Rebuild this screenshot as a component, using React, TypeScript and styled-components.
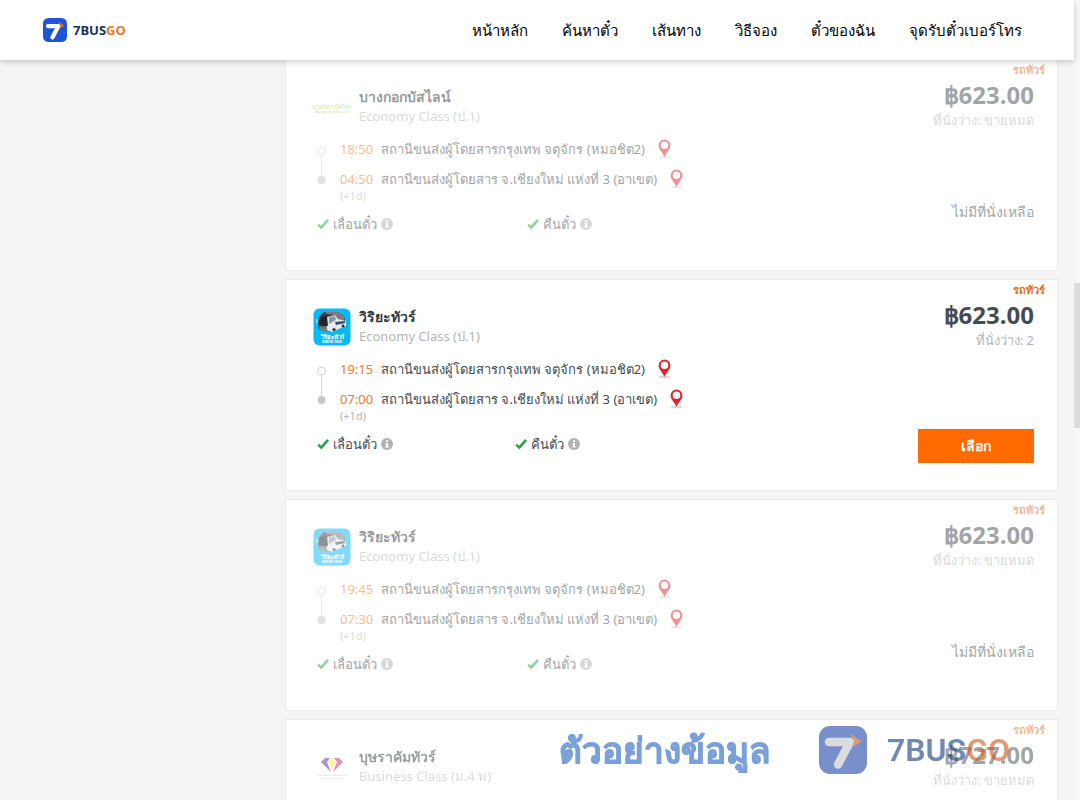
import React from "react";
import styled, { createGlobalStyle } from "styled-components";

const sans = `"Noto Sans", "Open Sans", "Liberation Sans", sans-serif`;

const GlobalStyle = createGlobalStyle`
  *, *::before, *::after { box-sizing: border-box; }
  body { margin: 0; background: #f5f5f5; font-family: ${sans}; font-size: 13px; color: #444b52; }
`;

const Page = styled.div`
  display: flex;
  height: 100vh;
  overflow: hidden;
`;

const Content = styled.div`
  position: relative;
  flex: 1;
  min-width: 0;
`;

const Header = styled.header`
  position: absolute;
  inset: 0 0 auto 0;
  z-index: 2;
  display: flex;
  align-items: center;
  justify-content: space-between;
  height: 60px;
  padding: 0 52px 0 43px;
  background: #fff;
  box-shadow: 0 2px 6px rgba(0, 0, 0, 0.2);
`;

const Brand = styled.a`
  display: flex;
  align-items: center;
  gap: 6px;
  font-size: 13px;
  font-weight: 700;
  line-height: 24px;
  color: #16305a;
  text-decoration: none;
`;

const Accent = styled.span`
  color: #ee7a2b;
`;

const Nav = styled.nav`
  display: flex;
  gap: 34px;
`;

const NavLink = styled.a`
  font-size: 15px;
  line-height: 24px;
  color: #000;
  text-decoration: none;
  white-space: nowrap;
`;

const Results = styled.main`
  display: flex;
  flex-direction: column;
  gap: 8px;
  padding: 59px 16px 0 285px;
`;

const Card = styled.article`
  position: relative;
  display: flex;
  min-height: 212px;
  padding: 27px 23px 24px 27px;
  background: #fff;
  border: 1px solid #ececec;
`;

const Faded = styled.div<{ $soldOut?: boolean }>`
  display: flex;
  flex: 1;
  opacity: ${(p) => (p.$soldOut ? 0.5 : 1)};
`;

const Tag = styled.span`
  position: absolute;
  top: 3px;
  right: 12px;
  font-size: 11px;
  font-weight: 700;
  line-height: 14px;
  color: #e0701c;
`;

const Trip = styled.section`
  flex: 1;
  min-width: 0;
`;

const Operator = styled.div`
  display: flex;
  align-items: center;
  gap: 8px;
`;

const OperatorText = styled.div`
  padding-bottom: 2px;
`;

const OperatorName = styled.h3`
  margin: 0;
  font-size: 14px;
  font-weight: 700;
  line-height: 20px;
  color: #33383d;
`;

const ClassName = styled.p`
  margin: 0;
  line-height: 18px;
  color: #b4b4b4;
`;

const Route = styled.div`
  display: flex;
  gap: 14px;
  margin: 11px 0 0 4px;
`;

const Stops = styled.ul`
  margin: 0;
  padding: 0;
  list-style: none;
`;

const Stop = styled.li`
  display: grid;
  grid-template-columns: 33px auto auto;
  column-gap: 8px;
  align-content: start;
  justify-content: start;
  min-height: 30px;
  line-height: 22px;
  white-space: nowrap;
`;

const Time = styled.time`
  color: #f47a1c;
`;

const NextDay = styled.span`
  grid-column: 1;
  font-size: 11px;
  line-height: 12px;
  color: #b4b4b4;
`;

const PinIcon = styled.svg`
  margin-left: 4px;
`;

const Features = styled.ul`
  display: grid;
  grid-template-columns: 1fr 1fr;
  margin: 10px 0 0 4px;
  padding: 0;
  list-style: none;
`;

const Feature = styled.li`
  display: flex;
  align-items: center;
  gap: 4px;
  line-height: 24px;
`;

const Side = styled.section<{ $bookable?: boolean }>`
  display: flex;
  flex: 0 0 ${(p) => (p.$bookable ? "321px" : "297px")};
  flex-direction: column;
  align-items: flex-end;
`;

const Price = styled.strong`
  font-size: 24px;
  font-weight: 700;
  line-height: 28px;
  margin-top: -6px;
`;

const Seats = styled.span`
  margin-top: 1px;
  line-height: 20px;
  color: #b4b4b4;
`;

const Status = styled.span`
  margin-top: 72px;
  font-size: 14px;
  line-height: 20px;
`;

const SelectButton = styled.button`
  width: 116px;
  height: 34px;
  margin-top: 79px;
  border: 0;
  background: #ff6a00;
  color: #fff;
  font: 700 14px/20px ${sans};
`;

const Track = styled.div`
  flex: 0 0 6px;
  padding-top: 283px;
  background: #f7f7f7;
`;

const Thumb = styled.div`
  height: 145px;
  background: #dcdcdc;
`;

const Watermark = styled.div`
  position: absolute;
  right: 64px;
  bottom: 24px;
  z-index: 1;
  display: flex;
  align-items: center;
  color: #2263bd;
  font-size: 35px;
  font-weight: 700;
  line-height: 52px;
  opacity: 0.6;
  white-space: nowrap;
`;

const WatermarkText = styled.span`
  -webkit-text-stroke: 1px #2263bd;
`;

const WatermarkBrand = styled.span`
  display: flex;
  align-items: center;
  gap: 20px;
  margin-left: 49px;
  font-family: Roboto, ${sans};
  font-size: 32px;
  font-weight: 600;
  color: #143a80;
`;

const WatermarkAccent = styled.span`
  color: #c8591a;
`;

type LogoProps = { size: number; blue?: string; white?: string; orange?: string };

const LogoMark = ({ size, blue = "#1d55d6", white = "#fff", orange = "#ee6b1f" }: LogoProps) => (
  <svg width={size} height={size} viewBox="0 0 48 48" aria-hidden="true">
    <rect width="48" height="48" rx="11" fill={blue} />
    <path d="M10 16H31L19 38.500" fill="none" stroke={white} strokeWidth="8.500" strokeLinecap="round" strokeLinejoin="round" />
    <path d="M30.500 7.500L43 15.500L33 21L35 15Z" fill={orange} />
  </svg>
);

const Pin = () => (
  <PinIcon width="15" height="22" viewBox="0 0 15 22" aria-hidden="true">
    <ellipse cx="7.500" cy="19" rx="6" ry="1.500" fill="#d9d9d9" />
    <path
      fillRule="evenodd"
      d="M7.500 1.500A5.900 5.900 0 0 0 1.600 7.400C1.600 11.400 6 14.600 7.500 19C9 14.600 13.400 11.400 13.400 7.400A5.900 5.900 0 0 0 7.500 1.500ZM7.500 3.500A3.800 3.800 0 1 1 7.500 11.100A3.800 3.800 0 0 1 7.500 3.500Z"
      fill="#e0242c"
    />
  </PinIcon>
);

const Check = () => (
  <svg width="12" height="12" viewBox="0 0 12 12" aria-hidden="true">
    <path d="M1.200 6.600L4.300 9.600L11 1.800" fill="none" stroke="#28a745" strokeWidth="2.600" />
  </svg>
);

const Info = () => (
  <svg width="12" height="12" viewBox="0 0 12 12" aria-hidden="true">
    <circle cx="6" cy="6" r="6" fill="#b2b2b2" />
    <path d="M5 2.300h2v1.700H5zM4.400 5H7v3.200h.7v1.200H4.400V8.200H5V6.100h-.6z" fill="#fff" />
  </svg>
);

const Line = () => (
  <svg width="9" height="60" viewBox="0 0 9 60" aria-hidden="true">
    <path d="M4.500 17V39" stroke="#d6d6d6" />
    <circle cx="4.500" cy="13" r="4" fill="#fff" stroke="#cfcfcf" />
    <circle cx="4.500" cy="42" r="4" fill="#c6c6c6" />
  </svg>
);

const svgText = { fontFamily: "Noto Sans, sans-serif" };

const BangkokLogo = () => (
  <svg width="38" height="38" viewBox="0 0 38 38" aria-hidden="true">
    <text x="19" y="21" textAnchor="middle" fontSize="6" fontWeight="500" fill="#8fcb3a" {...svgText}>บางกอกบัสไลน์</text>
    <text x="19" y="25" textAnchor="middle" fontSize="4" fill="#8fcb3a" {...svgText}>Bangkok Bus Line</text>
  </svg>
);

const WiriyaLogo = () => (
  <svg width="38" height="38" viewBox="0 0 38 38" aria-hidden="true">
    <rect x="0.500" y="0.500" width="37" height="37" rx="6" fill="#08b9f8" />
    <path d="M6 9L11 4L25 4L31 8L33 18L19 24L6 21L5 15Z" fill="#3b3a40" />
    <path d="M12 4L25 4L31 8V13L25 11L22 7L14 6Z" fill="#85787a" />
    <path d="M14 9L22 7L25 11L33 13V18L19 24L13 22Z" fill="#e4e8f0" />
    <path d="M16 9L22 8L23 12L16 16Z" fill="#8d95a8" />
    <path d="M22 14L32 13V15L23 17Z" fill="#3c4658" />
    <path d="M7 9L14 8L15 18L6 17Z" fill="#1d262a" />
    <path d="M6 18L14 19V24L7 22Z" fill="#73806e" />
    <path d="M4 11V15" stroke="#e8f6ff" />
    <circle cx="21" cy="21.500" r="1.600" fill="#30343c" />
    <circle cx="30" cy="18" r="1.400" fill="#30343c" />
    <text x="19" y="31" textAnchor="middle" fontSize="6" fontWeight="700" fill="#fff" {...svgText}>วิริยะทัวร์</text>
    <text x="19" y="35" textAnchor="middle" fontSize="3" fontWeight="700" fill="#fff" {...svgText}>WIRIYA TOUR</text>
  </svg>
);

const BussaracumLogo = () => (
  <svg width="38" height="38" viewBox="0 0 38 38" aria-hidden="true">
    <path d="M12 10H17L14 14L18 24L8 14Z" fill="#4a3191" />
    <path d="M21 10H26L30 14L20 24L24 14Z" fill="#d51b78" />
    <path d="M19 10L23 14L19 22L15 14Z" fill="#f6ea3a" />
    <path d="M4 27.500H34" stroke="#cfc8c0" strokeDasharray="2 1" />
    <path d="M7 30.500H31" stroke="#e8e2da" />
  </svg>
);

type Departure = {
  logo: React.ReactNode;
  operator: string;
  busClass: string;
  price: string;
  seats: string;
  depart?: string;
  arrive?: string;
  bookable?: boolean;
};

const departures: Departure[] = [
  { logo: <BangkokLogo />, operator: "บางกอกบัสไลน์", busClass: "Economy Class (ป.1)", price: "฿623.00", seats: "ขายหมด", depart: "18:50", arrive: "04:50" },
  { logo: <WiriyaLogo />, operator: "วิริยะทัวร์", busClass: "Economy Class (ป.1)", price: "฿623.00", seats: "2", depart: "19:15", arrive: "07:00", bookable: true },
  { logo: <WiriyaLogo />, operator: "วิริยะทัวร์", busClass: "Economy Class (ป.1)", price: "฿623.00", seats: "ขายหมด", depart: "19:45", arrive: "07:30" },
  { logo: <BussaracumLogo />, operator: "บุษราคัมทัวร์", busClass: "Business Class (ม.4 พ)", price: "฿727.00", seats: "ขายหมด" },
];

const navItems = ["หน้าหลัก", "ค้นหาตั๋ว", "เส้นทาง", "วิธีจอง", "ตั๋วของฉัน", "จุดรับตั๋วเบอร์โทร"];

const DepartureCard = ({ d }: { d: Departure }) => (
  <Card>
    <Faded $soldOut={!d.bookable}>
      <Tag>รถทัวร์</Tag>
      <Trip>
        <Operator>
          {d.logo}
          <OperatorText>
            <OperatorName>{d.operator}</OperatorName>
            <ClassName>{d.busClass}</ClassName>
          </OperatorText>
        </Operator>
        {d.depart && (
          <>
            <Route>
              <Line />
              <Stops>
                <Stop>
                  <Time>{d.depart}</Time>
                  <span>สถานีขนส่งผู้โดยสารกรุงเทพ จตุจักร (หมอชิต2)</span>
                  <Pin />
                </Stop>
                <Stop>
                  <Time>{d.arrive}</Time>
                  <span>สถานีขนส่งผู้โดยสาร จ.เชียงใหม่ แห่งที่ 3 (อาเขต)</span>
                  <Pin />
                  <NextDay>(+1d)</NextDay>
                </Stop>
              </Stops>
            </Route>
            <Features>
              <Feature><Check />เลื่อนตั๋ว<Info /></Feature>
              <Feature><Check />คืนตั๋ว<Info /></Feature>
            </Features>
          </>
        )}
      </Trip>
      <Side $bookable={d.bookable}>
        <Price>{d.price}</Price>
        <Seats>ที่นั่งว่าง: {d.seats}</Seats>
        {d.depart && (d.bookable ? <SelectButton type="button">เลือก</SelectButton> : <Status>ไม่มีที่นั่งเหลือ</Status>)}
      </Side>
    </Faded>
  </Card>
);

export default function App() {
  return (
    <>
      <GlobalStyle />
      <Page>
        <Content>
          <Header>
            <Brand href="#">
              <LogoMark size={24} />
              <span>7BUS<Accent>GO</Accent></span>
            </Brand>
            <Nav>
              {navItems.map((item) => <NavLink key={item} href="#">{item}</NavLink>)}
            </Nav>
          </Header>
          <Results>
            {departures.map((d, i) => <DepartureCard key={i} d={d} />)}
          </Results>
          <Watermark>
            <WatermarkText>ตัวอย่างข้อมูล</WatermarkText>
            <WatermarkBrand>
              <LogoMark size={48} blue="#1f45aa" white="#c4c4c8" orange="#c8591a" />
              <span>7BUS<WatermarkAccent>GO</WatermarkAccent></span>
            </WatermarkBrand>
          </Watermark>
        </Content>
        <Track><Thumb /></Track>
      </Page>
    </>
  );
}
